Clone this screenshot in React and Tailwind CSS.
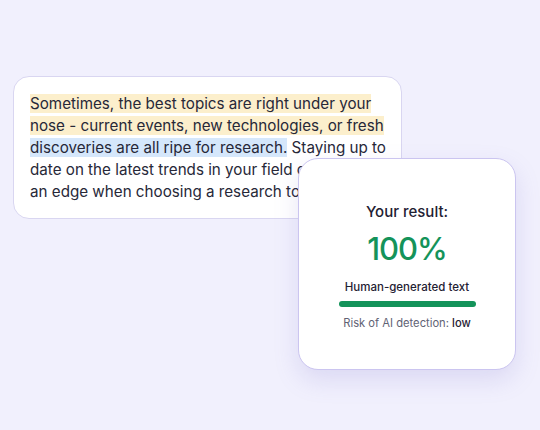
import React from 'react';

const App = () => {
  return (
    <div className="w-[540px] h-[430px] bg-[#f1f0fd] overflow-hidden" style={{ fontFamily: 'Inter, "Noto Sans", sans-serif' }}>
      <div className="relative pt-[76px] pl-[13px]">
        {/** Text sample card **/}
        <div className="w-[389px] h-[143px] bg-white rounded-[16px] border border-[#d9d6f1] pt-[16px] pl-[16px] pr-[10px]">
          <p className="text-[15.2px] leading-[22px] text-[#272838]">
            <span className="bg-[#fcefcc]">Sometimes, the best topics are right under your nose - current events, new technologies, or fresh</span>{' '}
            <span className="bg-[#d5e7fb]">discoveries are all ripe for research.</span> Staying up to date on the latest trends in your field can give you an edge when choosing a research topic.
          </p>
        </div>

        {/** Result card **/}
        <div className="absolute left-[298px] top-[158px] w-[218px] h-[212px] bg-white rounded-[20px] border border-[#cbc5f0] shadow-[0_10px_24px_rgba(120,110,200,0.18)] flex flex-col items-center pt-[43px]">
          <p className="text-[15px] leading-[20px] font-medium text-[#1f2133]">Your result:</p>
          <p className="mt-[9px] text-[31px] leading-[36px] font-medium tracking-[-1px] text-[#14935a]">100%</p>
          <p className="mt-[11px] text-[11.5px] leading-[18px] font-medium text-[#1f2133]">Human-generated text</p>
          <div className="mt-[5px] w-[137px] h-[6px] rounded-full bg-[#14935a]"></div>
          <p className="mt-[8px] text-[11.2px] leading-[16px] text-[#5f6274]">
            Risk of AI detection: <span className="font-medium text-[#1f2133]">low</span>
          </p>
        </div>
      </div>
    </div>
  );
};

export default App;
